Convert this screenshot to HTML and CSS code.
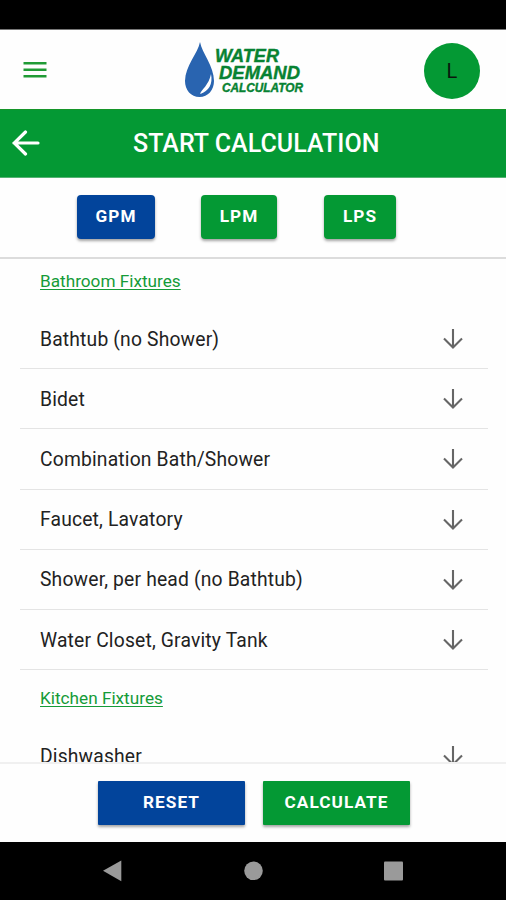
FILE: index.html
```html
<!DOCTYPE html>
<html lang="en">
<head>
<meta charset="utf-8">
<title>Water Demand Calculator</title>
<link rel="stylesheet" href="styles.css">
</head>
<body>
<div class="status-bar"></div>
<header class="app-header">
  <svg class="menu" viewBox="0 0 24 16"><path d="M.5 1.300h23M.5 7.800h23M.5 14.200h23"/></svg>
  <svg class="logo" viewBox="0 0 122 60" role="img" aria-label="Water Demand Calculator">
    <path class="drop" d="M16 1C14 12 1 25 1 40c0 9 6 16 14.500 16S30 49 30 40C30 25 18 12 16 1Z"/>
    <path class="shine" d="M27 33c2 10-2 17-11 20 1-4 9-9 11-20Z"/>
    <g class="logo-text">
      <text x="31" y="20.500" font-size="18" textLength="64" lengthAdjust="spacingAndGlyphs">WATER</text>
      <text x="35" y="38" font-size="18" textLength="81" lengthAdjust="spacingAndGlyphs">DEMAND</text>
      <text class="small" x="38" y="50.500" textLength="81" lengthAdjust="spacingAndGlyphs">CALCULATOR</text>
    </g>
  </svg>
  <div class="avatar">L</div>
</header>
<div class="title-bar">
  <svg class="back" viewBox="0 0 28 26"><path d="M26 13H2M13.500 2 2.200 13 13.500 24"/></svg>
  <h1>START CALCULATION</h1>
</div>
<div class="units">
  <button class="btn gpm">GPM</button>
  <button class="btn lpm">LPM</button>
  <button class="btn lps">LPS</button>
</div>
<main class="fixtures">
  <h2>Bathroom Fixtures</h2>
  <ul>
    <li><span>Bathtub (no Shower)</span><svg viewBox="0 0 20 20"><path d="M10 0v18M1 9.500l9 9 9-9"/></svg></li>
    <li><span>Bidet</span><svg viewBox="0 0 20 20"><path d="M10 0v18M1 9.500l9 9 9-9"/></svg></li>
    <li><span>Combination Bath/Shower</span><svg viewBox="0 0 20 20"><path d="M10 0v18M1 9.500l9 9 9-9"/></svg></li>
    <li><span>Faucet, Lavatory</span><svg viewBox="0 0 20 20"><path d="M10 0v18M1 9.500l9 9 9-9"/></svg></li>
    <li><span>Shower, per head (no Bathtub)</span><svg viewBox="0 0 20 20"><path d="M10 0v18M1 9.500l9 9 9-9"/></svg></li>
    <li><span>Water Closet, Gravity Tank</span><svg viewBox="0 0 20 20"><path d="M10 0v18M1 9.500l9 9 9-9"/></svg></li>
  </ul>
  <h2>Kitchen Fixtures</h2>
  <ul>
    <li><span>Dishwasher</span><svg viewBox="0 0 20 20"><path d="M10 0v18M1 9.500l9 9 9-9"/></svg></li>
  </ul>
</main>
<footer class="actions">
  <button class="btn reset">RESET</button>
  <button class="btn calculate">CALCULATE</button>
</footer>
<nav class="system-nav">
  <svg viewBox="0 0 506 59"><path d="M103 28.800 121.300 18.500V39.200Z"/><circle cx="253.500" cy="28.800" r="9.300"/><rect x="384" y="19.500" width="19" height="19" rx="1"/></svg>
</nav>
</body>
</html>
```

FILE: styles.css
```css
* { box-sizing: border-box; }
body {
  margin: 0;
  width: 506px;
  height: 900px;
  overflow: hidden;
  display: flex;
  flex-direction: column;
  background: #fefefe;
  font-family: Roboto, sans-serif;
}
body > * { flex: none; }
.status-bar { height: 30px; background: #000; border-bottom: 1px solid #777; }
.app-header {
  height: 79px;
  display: grid;
  grid-template-columns: 184px 122px 1fr;
  align-items: center;
  padding-right: 26px;
}
.menu { width: 24px; height: 16px; margin-left: 23px; }
.menu path { fill: none; stroke: #209b35; stroke-width: 2.4; }
.logo { width: 122px; height: 60px; margin-top: 2px; }
.drop { fill: #2964b0; }
.shine { fill: #fff; }
.logo-text { fill: #078232; font: italic 700 18px "Liberation Sans", sans-serif; stroke: #078232; stroke-width: .4px; }
.logo-text .small { font-size: 12px; }
.avatar {
  width: 56px;
  height: 56px;
  margin-top: 2px;
  justify-self: end;
  border-radius: 50%;
  background: #049934;
  color: #0b160c;
  display: grid;
  place-items: center;
  font-size: 20px;
}
.title-bar {
  height: 69px;
  display: flex;
  align-items: center;
  background: #049934;
  border-bottom: 1px solid #55b273;
  border-top: 1px solid #159529;
  color: #fff;
}
.back { width: 28px; height: 26px; margin: 0 0 1px 12px; }
.back path { fill: none; stroke: #fff; stroke-width: 3.2; stroke-linecap: round; }
.title-bar h1 { margin: 0 0 0 93px; font-size: 25px; font-weight: 500; letter-spacing: .03px; line-height: 30px; white-space: nowrap; }
.units {
  height: 81px;
  padding: 17px 0 0 77px;
  display: flex;
  border-bottom: 2px solid #dcdcdc;
}
.btn {
  height: 44px;
  padding: 0 0 2px;
  border: 0;
  border-radius: 4px;
  background: #049934;
  color: #fff;
  font: 700 17.2px Roboto, sans-serif;
  letter-spacing: 1.05px;
  box-shadow: 0 2px 3px rgba(0, 0, 0, .36);
}
.gpm { width: 78px; background: #02449b; margin-right: 46px; }
.lpm { width: 76px; margin-right: 47px; }
.lps { width: 72px; }
.fixtures { height: 505px; overflow: hidden; padding: 10px 18px 0 20px; }
.fixtures h2 {
  margin: 0 0 17px 20px;
  height: 23px;
  font-size: 17.2px;
  font-weight: 400;
  line-height: 24px;
  color: #159b38;
  text-decoration: underline;
  text-decoration-thickness: 1px;
  text-underline-offset: 2px;
}
.fixtures ul { margin: 0 0 16px; padding: 0; list-style: none; }
.fixtures li {
  height: 60.2px;
  display: flex;
  align-items: center;
  justify-content: space-between;
  padding: 1px 25px 0 20px;
  border-bottom: 1.5px solid #e4e4e4;
  font-size: 19.3px;
  letter-spacing: .17px;
  color: #222;
}
.fixtures li svg { width: 20px; height: 20px; }
.fixtures li path { fill: none; stroke: #666; stroke-width: 2.1; }
/* The divider sits beneath the last two pixels of the scrolling list. */
.actions {
  height: 80px;
  margin-top: -2px;
  padding: 17px 0 0 98px;
  display: flex;
  gap: 18px;
  border-top: 2px solid #f0f0f0;
}
.actions .btn { width: 147px; border-radius: 1px; }
.actions .reset { background: #02449b; }
.system-nav { height: 58px; background: #000; }
.system-nav svg { display: block; width: 506px; height: 59px; fill: #9a9a9a; }
```
